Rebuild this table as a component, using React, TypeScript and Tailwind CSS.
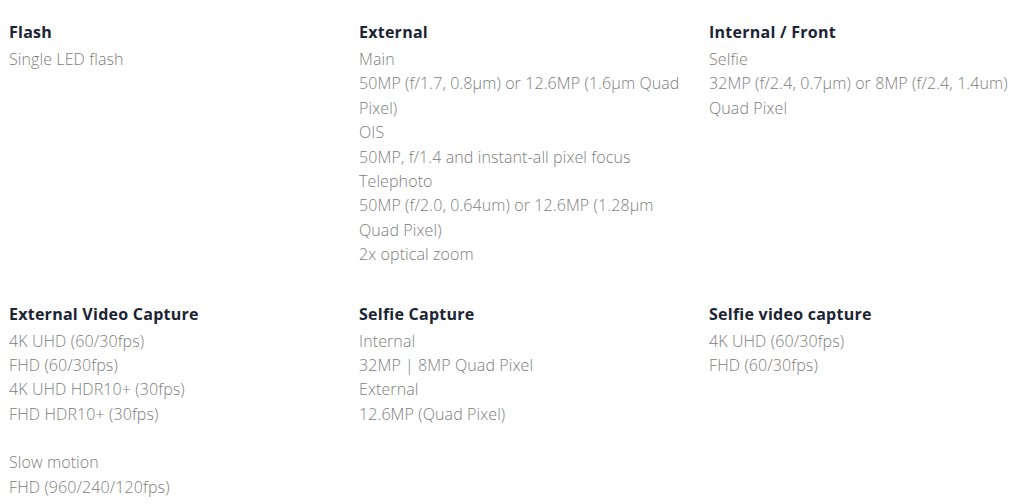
type Spec = { title: string; lines: string[] };

const rows: Spec[][] = [
  [
    { title: "Flash", lines: ["Single LED flash"] },
    {
      title: "External",
      lines: [
        "Main",
        "50MP (f/1.7, 0.8µm) or 12.6MP (1.6µm Quad",
        "Pixel)",
        "OIS",
        "50MP, f/1.4 and instant-all pixel focus",
        "Telephoto",
        "50MP (f/2.0, 0.64um) or 12.6MP (1.28µm",
        "Quad Pixel)",
        "2x optical zoom",
      ],
    },
    {
      title: "Internal / Front",
      lines: ["Selfie", "32MP (f/2.4, 0.7µm) or 8MP (f/2.4, 1.4um)", "Quad Pixel"],
    },
  ],
  [
    {
      title: "External Video Capture",
      lines: [
        "4K UHD (60/30fps)",
        "FHD (60/30fps)",
        "4K UHD HDR10+ (30fps)",
        "FHD HDR10+ (30fps)",
        "",
        "Slow motion",
        "FHD (960/240/120fps)",
      ],
    },
    {
      title: "Selfie Capture",
      lines: ["Internal", "32MP | 8MP Quad Pixel", "External", "12.6MP (Quad Pixel)"],
    },
    { title: "Selfie video capture", lines: ["4K UHD (60/30fps)", "FHD (60/30fps)"] },
  ],
];

const SpecBlock = ({ title, lines }: Spec) => (
  <div>
    <h3 className="font-bold text-[16px] tracking-[0.25px] leading-[24px] text-[#1a2433] mb-[3px] whitespace-nowrap">
      {title}
    </h3>
    {lines.map((l, i) => (
      <p
        key={i}
        className="text-[16px] tracking-[0.1px] leading-[24.4px] h-[24.4px] font-light text-[#7d7d7d] whitespace-nowrap"
      >
        {l}
      </p>
    ))}
  </div>
);

export default function App() {
  return (
    <div
      className="w-[1024px] h-[504px] overflow-hidden bg-white pl-[9px] pt-[20px] flex flex-col gap-[35px]"
      style={{ fontFamily: '"Open Sans", "Liberation Sans", sans-serif' }}
    >
      {rows.map((row, r) => (
        <div key={r} className="grid grid-cols-[350px_350px_1fr]">
          {row.map((s) => (
            <SpecBlock key={s.title} {...s} />
          ))}
        </div>
      ))}
    </div>
  );
}
